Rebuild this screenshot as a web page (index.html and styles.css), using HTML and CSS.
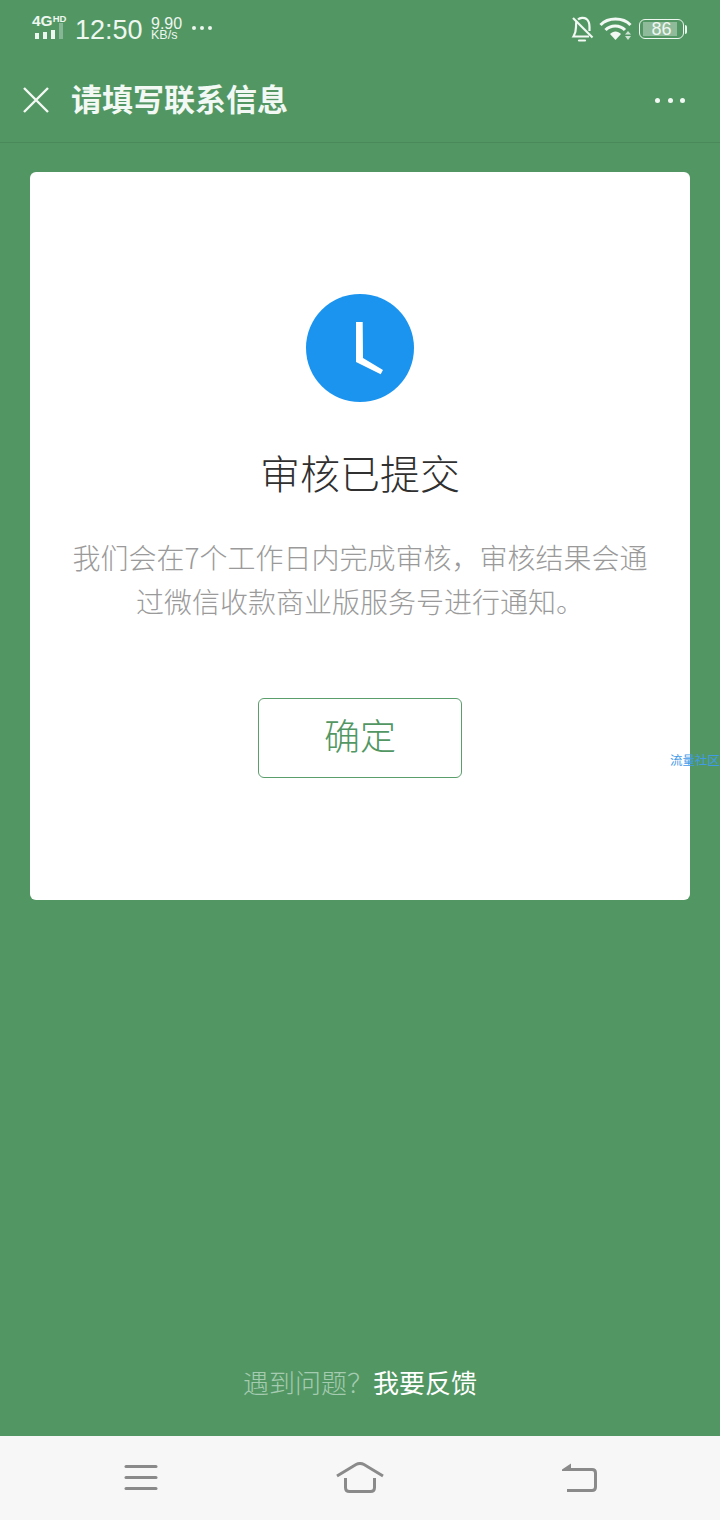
FILE: index.html
```html
<!DOCTYPE html>
<html lang="zh-CN">
<head>
<meta charset="utf-8">
<title>请填写联系信息</title>
<link rel="stylesheet" href="styles.css">
</head>
<body>
<div class="screen">
  <div class="status">
    <div class="status-left">
      <div class="signal">
        <div class="net"><span class="net-4g">4G</span><span class="net-hd">HD</span></div>
        <svg class="bars" width="32" height="16" viewBox="0 0 32 16"><g fill="#eef6f0"><rect x="3" y="10" width="4" height="6"/><rect x="11" y="9" width="4" height="7"/><rect x="19" y="7" width="4" height="9"/></g><rect x="27" y="0" width="4" height="16" fill="#86b693"/></svg>
      </div>
      <span class="clock">12:50</span>
      <div class="speed"><span class="speed-num">9.90</span><span class="speed-unit">KB/s</span></div>
      <div class="status-dots"><i></i><i></i><i></i></div>
    </div>
    <div class="status-right">
      <svg class="bell" width="24" height="26" viewBox="0 0 24 26" fill="none" stroke="#f2f8f4" stroke-width="2.2"><path d="M5.500 5 C5 7 5 9 5 11 C5 15 4.500 17 2.500 20.500 H18"/><path d="M7 3.500 C9 1.500 13 1.200 15.500 3 C18 5 18.500 8 18.500 11 V15"/><path d="M2 2 L21.500 21.500"/><path d="M8 24.500 H14" stroke-linecap="round"/></svg>
      <svg class="wifi" width="34" height="24" viewBox="0 0 34 24"><g fill="none" stroke="#f2f8f4" stroke-width="3"><path d="M1.500 8 C9 0 24 0 31.500 8"/><path d="M6.500 13 C11.500 7.500 21 7.500 26 13"/></g><path d="M11 17 C14 13.500 19 13.500 22 17 L16.500 23 Z" fill="#f2f8f4"/><path d="M29 14 L32 17.500 H26 Z M26 19 H32 L29 23 Z" fill="#cfe3d5"/></svg>
      <div class="battery">
        <div class="battery-body"><div class="battery-fill"></div><span class="battery-num">86</span></div>
        <div class="battery-tip"></div>
      </div>
    </div>
  </div>

  <header class="titlebar">
    <svg class="close" width="28" height="28" viewBox="0 0 28 28" fill="none" stroke="#f4f9f5" stroke-width="2.4"><path d="M2 2 L26 26 M26 2 L2 26"/></svg>
    <h1 class="title">请填写联系信息</h1>
    <div class="more"><i></i><i></i><i></i></div>
  </header>

  <main class="content">
    <section class="card">
      <svg class="clock-icon" width="108" height="108" viewBox="0 0 108 108"><circle cx="54" cy="54" r="54" fill="#1a94ef"/><path d="M50 28 H56.700 L57 64 L77 76 L74.700 80.300 L50 68 Z" fill="#fff"/></svg>
      <h2 class="card-title">审核已提交</h2>
      <p class="card-text">我们会在7个工作日内完成审核，审核结果会通过微信收款商业版服务号进行通知。</p>
      <button class="confirm">确定</button>
      <span class="watermark">流量社区</span>
    </section>
    <p class="feedback">遇到问题？<span class="feedback-link">我要反馈</span></p>
  </main>

  <nav class="navbar">
    <svg width="34" height="28" viewBox="0 0 34 28" fill="#8a8a8a"><rect x="0.500" y="1" width="33" height="3" rx="1.500"/><rect x="0.500" y="12" width="33" height="3" rx="1.500"/><rect x="0.500" y="23" width="33" height="3" rx="1.500"/></svg>
    <svg width="48" height="32" viewBox="0 0 48 32" fill="none" stroke="#8a8a8a" stroke-width="3"><path d="M1 14 L20 2.500 Q24 0.500 28 2.500 L47 14"/><path d="M9.500 16 V25.500 Q9.500 29.500 13.500 29.500 H34.500 Q38.500 29.500 38.500 25.500 V16"/></svg>
    <svg width="36" height="30" viewBox="0 0 36 30" fill="none"><path d="M1 6.500 L10 0.500 V8 H1 Z" fill="#8a8a8a"/><path d="M6 6.500 H31 Q34.500 6.500 34.500 10 V24 Q34.500 27.500 31 27.500 H6" stroke="#8a8a8a" stroke-width="3"/></svg>
  </nav>
</div>
</body>
</html>
```
FILE: styles.css
```css
* { box-sizing: border-box; }
html, body { margin: 0; padding: 0; }
body { font-family: "Noto Sans CJK SC", "Liberation Sans", sans-serif; }
.screen {
  width: 720px;
  height: 1520px;
  display: flex;
  flex-direction: column;
  background: #529763;
  overflow: hidden;
}
.status {
  height: 58px;
  flex: none;
  display: flex;
  justify-content: space-between;
  align-items: center;
  padding: 0 33px 0 32px;
  color: #eef6f0;
  font-family: "Liberation Sans", sans-serif;
}
.status-left { display: flex; align-items: center; }
.status-right { display: flex; align-items: center; }
.signal { width: 34px; display: flex; flex-direction: column; margin: 0 9px 5px 0; }
.net { display: flex; align-items: flex-start; height: 13px; line-height: 13px; }
.net-4g { font-size: 15.500px; font-weight: 700; }
.net-hd { font-size: 9.500px; font-weight: 700; line-height: 9px; }
.bars { display: block; margin-top: -4px; }
.clock { font-size: 27px; line-height: 32px; width: 76px; margin-top: 2px; }
.speed { display: flex; flex-direction: column; width: 41px; }
.speed-num { font-size: 16px; line-height: 13px; }
.speed-unit { font-size: 12.500px; line-height: 11px; }
.status-dots { display: flex; gap: 4px; margin-top: -3px; }
.status-dots i { width: 4px; height: 4px; border-radius: 50%; background: #eef6f0; }
.wifi { margin: 0 6px 0 4px; }
.battery { display: flex; align-items: center; }
.battery-body {
  width: 45px;
  height: 20px;
  border: 1.500px solid #eef6f0;
  border-radius: 6px;
  position: relative;
  display: flex;
  align-items: center;
  justify-content: center;
  padding: 2px 6px 2px 3px;
}
.battery-fill { flex: 1; height: 100%; background: #8fbb9b; }
.battery-num {
  position: absolute;
  left: 0;
  right: 0;
  text-align: center;
  font-size: 18px;
  line-height: 17px;
  color: #eef6f0;
}
.battery-tip { width: 2px; height: 9px; background: #eef6f0; border-radius: 0 2px 2px 0; margin-left: 1px; }

.titlebar {
  height: 85px;
  flex: none;
  display: flex;
  align-items: center;
  padding: 0 35px 0 22px;
  border-bottom: 1px solid #4a8a5a;
}
.close { flex: none; }
.title {
  margin: 0 0 4px 21px;
  flex: 1;
  font-size: 31px;
  line-height: 44px;
  font-weight: 700;
  color: #f2f8f4;
}
.more { display: flex; gap: 7.500px; }
.more i { width: 5px; height: 5px; border-radius: 50%; background: #f2f8f4; }

.content {
  flex: 1;
  display: flex;
  flex-direction: column;
  align-items: center;
  padding: 29px 30px 0;
}
.card {
  position: relative;
  width: 660px;
  height: 728px;
  background: #fff;
  border-radius: 6px;
  display: flex;
  flex-direction: column;
  align-items: center;
  padding: 122px 40px 0;
}
.clock-icon { display: block; flex: none; }
.card-title {
  margin: 42px 0 0;
  font-size: 40px;
  line-height: 56px;
  font-weight: 300;
  color: #303030;
}
.card-text {
  margin: 35px 0 0;
  width: 580px;
  text-align: center;
  font-size: 28px;
  line-height: 44px;
  font-weight: 300;
  color: #9a9a9a;
}
.confirm {
  margin-top: 75px;
  width: 204px;
  height: 80px;
  padding: 0 0 9px;
  background: #fff;
  border: 1px solid #5a9e6c;
  border-radius: 6px;
  font-family: inherit;
  font-size: 36px;
  font-weight: 300;
  color: #529763;
}
.watermark {
  position: absolute;
  left: 640px;
  top: 578px;
  font-size: 12.500px;
  line-height: 20px;
  color: #3f9ae8;
  white-space: nowrap;
}
.feedback {
  margin: auto 0 36px;
  font-size: 26px;
  line-height: 36px;
  font-weight: 300;
  color: #a5cbb0;
}
.feedback-link { color: #fff; font-weight: 400; }

.navbar {
  height: 84px;
  flex: none;
  background: #f7f7f7;
  display: flex;
  align-items: center;
  justify-content: space-between;
  padding: 0 123px 0 124px;
}
```
